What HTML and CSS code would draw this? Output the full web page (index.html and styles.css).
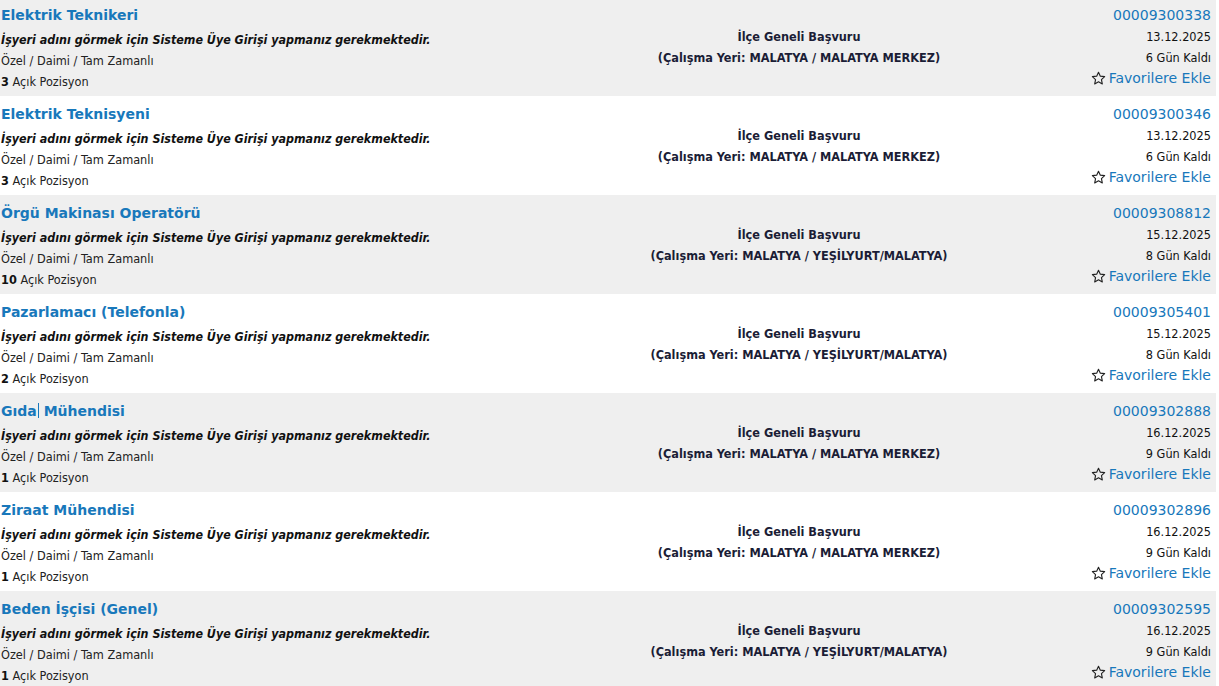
FILE: index.html
```html
<!DOCTYPE html>
<html lang="tr">
<head>
<meta charset="utf-8">
<title>İlanlar</title>
<link rel="stylesheet" href="styles.css">
</head>
<body>
<div class="list">

  <div class="row alt">
    <div class="col-left">
      <a class="title">Elektrik Teknikeri</a>
      <div class="employer">İşyeri adını görmek için Sisteme Üye Girişi yapmanız gerekmektedir.</div>
      <div class="meta">Özel / Daimi / Tam Zamanlı</div>
      <div class="meta"><b>3</b> Açık Pozisyon</div>
    </div>
    <div class="col-mid">
      <div>İlçe Geneli Başvuru</div>
      <div>(Çalışma Yeri: MALATYA / MALATYA MERKEZ)</div>
    </div>
    <div class="col-right">
      <a class="num">00009300338</a>
      <div class="date">13.12.2025</div>
      <div class="left">6 Gün Kaldı</div>
      <a class="fav"><svg class="star" viewBox="0 0 16 16"><path d="M8 1.3l1.95 4.2 4.6.55-3.4 3.15.9 4.55L8 11.5l-4.05 2.25.9-4.55L1.45 6.05l4.6-.55z"/></svg>Favorilere Ekle</a>
    </div>
  </div>

  <div class="row">
    <div class="col-left">
      <a class="title">Elektrik Teknisyeni</a>
      <div class="employer">İşyeri adını görmek için Sisteme Üye Girişi yapmanız gerekmektedir.</div>
      <div class="meta">Özel / Daimi / Tam Zamanlı</div>
      <div class="meta"><b>3</b> Açık Pozisyon</div>
    </div>
    <div class="col-mid">
      <div>İlçe Geneli Başvuru</div>
      <div>(Çalışma Yeri: MALATYA / MALATYA MERKEZ)</div>
    </div>
    <div class="col-right">
      <a class="num">00009300346</a>
      <div class="date">13.12.2025</div>
      <div class="left">6 Gün Kaldı</div>
      <a class="fav"><svg class="star" viewBox="0 0 16 16"><path d="M8 1.3l1.95 4.2 4.6.55-3.4 3.15.9 4.55L8 11.5l-4.05 2.25.9-4.55L1.45 6.05l4.6-.55z"/></svg>Favorilere Ekle</a>
    </div>
  </div>

  <div class="row alt">
    <div class="col-left">
      <a class="title">Örgü Makinası Operatörü</a>
      <div class="employer">İşyeri adını görmek için Sisteme Üye Girişi yapmanız gerekmektedir.</div>
      <div class="meta">Özel / Daimi / Tam Zamanlı</div>
      <div class="meta"><b>10</b> Açık Pozisyon</div>
    </div>
    <div class="col-mid">
      <div>İlçe Geneli Başvuru</div>
      <div>(Çalışma Yeri: MALATYA / YEŞİLYURT/MALATYA)</div>
    </div>
    <div class="col-right">
      <a class="num">00009308812</a>
      <div class="date">15.12.2025</div>
      <div class="left">8 Gün Kaldı</div>
      <a class="fav"><svg class="star" viewBox="0 0 16 16"><path d="M8 1.3l1.95 4.2 4.6.55-3.4 3.15.9 4.55L8 11.5l-4.05 2.25.9-4.55L1.45 6.05l4.6-.55z"/></svg>Favorilere Ekle</a>
    </div>
  </div>

  <div class="row">
    <div class="col-left">
      <a class="title">Pazarlamacı (Telefonla)</a>
      <div class="employer">İşyeri adını görmek için Sisteme Üye Girişi yapmanız gerekmektedir.</div>
      <div class="meta">Özel / Daimi / Tam Zamanlı</div>
      <div class="meta"><b>2</b> Açık Pozisyon</div>
    </div>
    <div class="col-mid">
      <div>İlçe Geneli Başvuru</div>
      <div>(Çalışma Yeri: MALATYA / YEŞİLYURT/MALATYA)</div>
    </div>
    <div class="col-right">
      <a class="num">00009305401</a>
      <div class="date">15.12.2025</div>
      <div class="left">8 Gün Kaldı</div>
      <a class="fav"><svg class="star" viewBox="0 0 16 16"><path d="M8 1.3l1.95 4.2 4.6.55-3.4 3.15.9 4.55L8 11.5l-4.05 2.25.9-4.55L1.45 6.05l4.6-.55z"/></svg>Favorilere Ekle</a>
    </div>
  </div>

  <div class="row alt">
    <div class="col-left">
      <a class="title">Gıda<span class="caret"></span> Mühendisi</a>
      <div class="employer">İşyeri adını görmek için Sisteme Üye Girişi yapmanız gerekmektedir.</div>
      <div class="meta">Özel / Daimi / Tam Zamanlı</div>
      <div class="meta"><b>1</b> Açık Pozisyon</div>
    </div>
    <div class="col-mid">
      <div>İlçe Geneli Başvuru</div>
      <div>(Çalışma Yeri: MALATYA / MALATYA MERKEZ)</div>
    </div>
    <div class="col-right">
      <a class="num">00009302888</a>
      <div class="date">16.12.2025</div>
      <div class="left">9 Gün Kaldı</div>
      <a class="fav"><svg class="star" viewBox="0 0 16 16"><path d="M8 1.3l1.95 4.2 4.6.55-3.4 3.15.9 4.55L8 11.5l-4.05 2.25.9-4.55L1.45 6.05l4.6-.55z"/></svg>Favorilere Ekle</a>
    </div>
  </div>

  <div class="row">
    <div class="col-left">
      <a class="title">Ziraat Mühendisi</a>
      <div class="employer">İşyeri adını görmek için Sisteme Üye Girişi yapmanız gerekmektedir.</div>
      <div class="meta">Özel / Daimi / Tam Zamanlı</div>
      <div class="meta"><b>1</b> Açık Pozisyon</div>
    </div>
    <div class="col-mid">
      <div>İlçe Geneli Başvuru</div>
      <div>(Çalışma Yeri: MALATYA / MALATYA MERKEZ)</div>
    </div>
    <div class="col-right">
      <a class="num">00009302896</a>
      <div class="date">16.12.2025</div>
      <div class="left">9 Gün Kaldı</div>
      <a class="fav"><svg class="star" viewBox="0 0 16 16"><path d="M8 1.3l1.95 4.2 4.6.55-3.4 3.15.9 4.55L8 11.5l-4.05 2.25.9-4.55L1.45 6.05l4.6-.55z"/></svg>Favorilere Ekle</a>
    </div>
  </div>

  <div class="row alt">
    <div class="col-left">
      <a class="title">Beden İşçisi (Genel)</a>
      <div class="employer">İşyeri adını görmek için Sisteme Üye Girişi yapmanız gerekmektedir.</div>
      <div class="meta">Özel / Daimi / Tam Zamanlı</div>
      <div class="meta"><b>1</b> Açık Pozisyon</div>
    </div>
    <div class="col-mid">
      <div>İlçe Geneli Başvuru</div>
      <div>(Çalışma Yeri: MALATYA / YEŞİLYURT/MALATYA)</div>
    </div>
    <div class="col-right">
      <a class="num">00009302595</a>
      <div class="date">16.12.2025</div>
      <div class="left">9 Gün Kaldı</div>
      <a class="fav"><svg class="star" viewBox="0 0 16 16"><path d="M8 1.3l1.95 4.2 4.6.55-3.4 3.15.9 4.55L8 11.5l-4.05 2.25.9-4.55L1.45 6.05l4.6-.55z"/></svg>Favorilere Ekle</a>
    </div>
  </div>

</div>
</body>
</html>
```

FILE: styles.css
```css
html, body {
  margin: 0;
  padding: 0;
  background: #ffffff;
}
body {
  font-family: "DejaVu Sans", Verdana, sans-serif;
  color: #111;
  overflow: hidden;
}
.list {
  width: 1216px;
  margin-top: -3px;
}
.row {
  display: grid;
  grid-template-columns: 640px 318px 1fr;
  height: 99px;
  background: #ffffff;
}
.row.alt {
  background: #efefef;
}
.col-left {
  padding: 8px 0 0 1px;
  display: flex;
  flex-direction: column;
  align-items: flex-start;
}
.title {
  color: #1878bb;
  font-weight: bold;
  font-size: 14px;
  line-height: 21px;
  margin-bottom: 3px;
}
.caret {
  display: inline-block;
  width: 1px;
  height: 15px;
  background: #1878bb;
  vertical-align: -2px;
  margin-left: 1px;
}
.employer {
  font-family: "DejaVu Sans Condensed", "DejaVu Sans", sans-serif;
  font-stretch: condensed;
  font-weight: bold;
  font-style: italic;
  font-size: 12.4px;
  line-height: 20px;
  padding-top: 1px;
  color: #111;
}
.meta {
  font-family: "DejaVu Sans Condensed", "DejaVu Sans", sans-serif;
  font-stretch: condensed;
  font-size: 12.6px;
  line-height: 21px;
  color: #222;
}
.meta b {
  color: #111;
}
.col-mid {
  display: flex;
  flex-direction: column;
  justify-content: center;
  align-items: center;
  font-family: "DejaVu Sans Condensed", "DejaVu Sans", sans-serif;
  font-stretch: condensed;
  font-weight: bold;
  font-size: 12.6px;
  line-height: 21px;
  color: #1b1d36;
  padding-top: 1px;
}
.col-right {
  padding: 8px 5px 0 0;
  display: flex;
  flex-direction: column;
  align-items: flex-end;
}
.num {
  color: #1878bb;
  font-size: 14px;
  line-height: 21px;
}
.date, .left {
  font-family: "DejaVu Sans Condensed", "DejaVu Sans", sans-serif;
  font-stretch: condensed;
  font-size: 12.6px;
  line-height: 20px;
  padding-top: 1px;
  color: #111;
}
.fav {
  color: #1878bb;
  font-size: 14px;
  line-height: 21px;
  display: flex;
  align-items: center;
  gap: 3px;
}
.star {
  width: 15px;
  height: 15px;
  fill: none;
  stroke: #222;
  stroke-width: 1.2;
  stroke-linejoin: round;
}
```
